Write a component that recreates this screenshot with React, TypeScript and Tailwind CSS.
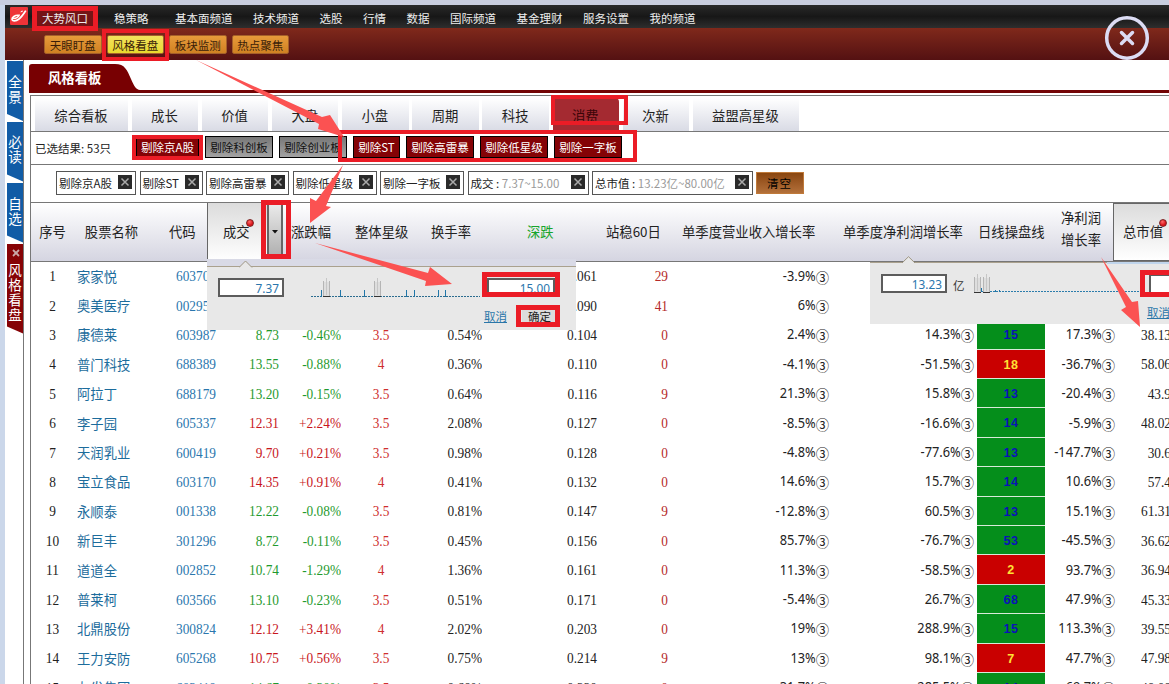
import { ReactNode } from 'react';
import clsx from 'clsx';

const NAV = ['基本面频道', '技术频道', '选股', '行情', '数据', '国际频道', '基金理财', '服务设置', '我的频道'];
const SUB_NAV = ['天眼盯盘', '风格看盘', '板块监测', '热点聚焦'];
const STYLE_TABS = ['成长', '价值', '大盘', '小盘', '周期', '科技', '消费', '次新'];

const EXCLUDES = [
  { label: '剔除京A股', on: true, width: 'w-[63px]' },
  { label: '剔除科创板', on: false, width: 'w-[68px]' },
  { label: '剔除创业板', on: false, width: 'w-[68px]' },
  { label: '剔除ST', on: true, width: 'w-[47px]' },
  { label: '剔除高雷暴', on: true, width: 'w-[68px]' },
  { label: '剔除低星级', on: true, width: 'w-[68px]' },
  { label: '剔除一字板', on: true, width: 'w-[68px]' },
];

const CHIPS = [
  { label: '剔除京A股', value: '', width: 'w-[80px]' },
  { label: '剔除ST', value: '', width: 'w-[63px]' },
  { label: '剔除高雷暴', value: '', width: 'w-[83px]' },
  { label: '剔除低星级', value: '', width: 'w-[84px]' },
  { label: '剔除一字板', value: '', width: 'w-[84px]' },
  { label: '成交 : ', value: '7.37~15.00', width: 'w-[121px]' },
  { label: '总市值 : ', value: '13.23亿~80.00亿', width: 'w-[161px]' },
];

// no, name, code, price, change, star, turnover, dip, days, revenue, profit, line, net, cap
const ROWS: string[][] = [
  ['1', '家家悦', '603708', '', '', '', '', '0.061', '29', '-3.9%', '', '', '', ''],
  ['2', '奥美医疗', '002950', '', '', '', '', '0.090', '41', '6%', '', '', '', ''],
  ['3', '康德莱', '603987', '8.73', '-0.46%', '3.5', '0.54%', '0.104', '0', '2.4%', '14.3%', '15', '17.3%', '38.13亿'],
  ['4', '普门科技', '688389', '13.55', '-0.88%', '4', '0.36%', '0.110', '0', '-4.1%', '-51.5%', '18', '-36.7%', '58.06亿'],
  ['5', '阿拉丁', '688179', '13.20', '-0.15%', '3.5', '0.64%', '0.116', '9', '21.3%', '15.8%', '13', '-20.4%', '43.9亿'],
  ['6', '李子园', '605337', '12.31', '+2.24%', '3.5', '2.08%', '0.127', '0', '-8.5%', '-16.6%', '14', '-5.9%', '48.02亿'],
  ['7', '天润乳业', '600419', '9.70', '+0.21%', '3.5', '0.98%', '0.128', '0', '-4.8%', '-77.6%', '13', '-147.7%', '30.6亿'],
  ['8', '宝立食品', '603170', '14.35', '+0.91%', '4', '0.41%', '0.132', '0', '14.6%', '15.7%', '14', '10.6%', '57.4亿'],
  ['9', '永顺泰', '001338', '12.22', '-0.08%', '3.5', '0.81%', '0.147', '9', '-12.8%', '60.5%', '13', '15.1%', '61.31亿'],
  ['10', '新巨丰', '301296', '8.72', '-0.11%', '3.5', '0.45%', '0.156', '0', '85.7%', '-76.7%', '53', '-45.5%', '36.62亿'],
  ['11', '道道全', '002852', '10.74', '-1.29%', '4', '1.36%', '0.161', '0', '11.3%', '-58.5%', '2', '93.7%', '36.94亿'],
  ['12', '普莱柯', '603566', '13.10', '-0.23%', '3.5', '0.51%', '0.171', '0', '-5.4%', '26.7%', '68', '47.9%', '45.33亿'],
  ['13', '北鼎股份', '300824', '12.12', '+3.41%', '4', '2.02%', '0.203', '0', '19%', '288.9%', '15', '113.3%', '39.55亿'],
  ['14', '王力安防', '605268', '10.75', '+0.56%', '3.5', '0.75%', '0.214', '9', '13%', '98.1%', '7', '47.7%', '47.98亿'],
  ['15', '友发集团', '603418', '14.67', '-0.30%', '3.5', '0.68%', '0.220', '0', '31.7%', '285.5%', '14', '69.7%', '48.08亿'],
];

const RED_LINES = ['18', '2', '7'];

const Num = ({ children }: { children: ReactNode }) => (
  <span className="inline-block scale-y-[1.1] font-['Liberation_Serif',serif]">{children}</span>
);

const Growth = ({ value, className }: { value: string; className: string }) => (
  <div className={clsx('flex shrink-0 items-center justify-end text-[#222]', className)}>
    {value && (
      <>
        <span className="inline-block scale-y-[1.1] font-['Noto_Sans',sans-serif] text-[12.8px]">{value}</span>
        <span className="relative top-px text-[13.33px]">③</span>
      </>
    )}
  </div>
);

const Row = ({ row }: { row: string[] }) => {
  const [no, name, code, price, change, star, turnover, dip, days, revenue, profit, line, net, cap] = row;
  const tone = change.startsWith('+') ? 'text-[#c8161d]' : 'text-[#1f9a2e]';
  return (
    <div className="flex h-[29.4px] items-center whitespace-nowrap text-right text-[13.33px] leading-[29px]">
      <div className="w-[43px] shrink-0 text-center text-[#222]"><Num>{no}</Num></div>
      <div className="w-[90px] shrink-0 pl-[3px] text-left text-[#1c6c9c]">{name}</div>
      <div className="w-[52px] shrink-0 text-[#2a76ad]"><Num>{code}</Num></div>
      <div className={clsx('w-[63px] shrink-0', tone)}><Num>{price}</Num></div>
      <div className={clsx('w-[62px] shrink-0', tone)}><Num>{change}</Num></div>
      <div className="w-20 shrink-0 text-center text-[#cf2f2f]"><Num>{star}</Num></div>
      <div className="w-[61px] shrink-0 text-[#222]"><Num>{turnover}</Num></div>
      <div className="w-[115px] shrink-0 text-[#222]"><Num>{dip}</Num></div>
      <div className="w-[71px] shrink-0 text-[#b52a2a]"><Num>{days}</Num></div>
      <Growth value={revenue} className="w-[161px]" />
      <Growth value={profit} className="w-[145px]" />
      <div
        className={clsx(
          "ml-[3px] h-full w-[68px] shrink-0 border-b border-[#d9ead9] text-center font-['Liberation_Sans',sans-serif] text-[12.5px] font-bold leading-[31px] tracking-[0.5px]",
          RED_LINES.includes(line) ? 'bg-[#c90000] text-[#ffe135]' : 'bg-[#058e1b] text-[#0a12b8]',
        )}
      >
        {line}
      </div>
      <Growth value={net} className="w-[70px]" />
      <div className="w-[73px] shrink-0 pr-1 text-[#222]"><Num>{cap}</Num></div>
    </div>
  );
};

const SideTab = ({ text, className, closable = false }: { text: string; className: string; closable?: boolean }) => (
  <div
    className={clsx(
      'flex w-4 flex-col items-center text-[13.5px] leading-[15.3px] text-white [clip-path:polygon(0_0,100%_0,100%_100%,0_calc(100%_-_7px))]',
      className,
    )}
  >
    {closable && (
      <svg className="mb-[5px] ml-0.5 mt-1 shrink-0" width="8" height="8">
        <path d="M1 1L7 7M7 1L1 7" stroke="#c9a8a8" strokeWidth="1.8" />
      </svg>
    )}
    {text.split('').map((c) => (
      <span key={c}>{c}</span>
    ))}
  </div>
);

const Dot = ({ className }: { className: string }) => (
  <span
    className={clsx(
      'absolute h-2 w-2 rounded-full border border-[#7d2222] bg-[radial-gradient(circle_at_40%_30%,#ff6a6a,#d9151b_60%)]',
      className,
    )}
  />
);

const Head = ({ children, className }: { children: ReactNode; className: string }) => (
  <div className={clsx('flex shrink-0 items-center whitespace-nowrap', className)}>{children}</div>
);

const Mark = ({ className }: { className: string }) => (
  <div className={clsx('absolute border-[#eb1c26]', className)} />
);

const Slider = ({ x }: { x: number }) => (
  <g>
    <rect x={x - 2.5} y="4" width="6" height="15" fill="#dedede" />
    <path d={`M${x - 2.5} 3V19M${x + 3.5} 3V19`} stroke="#b5b5b5" />
    <path d={`M${x + 0.5} 0V17`} stroke="#c6c6c6" />
    <path d={`M${x - 3} 18.5h7`} stroke="#333" />
  </g>
);

const PricePopup = () => (
  <div className="absolute left-[207px] top-[259px] h-[71px] w-[369px] bg-[#e8e8e8]">
    <div className="h-2 border-b border-[#aaa18e] bg-[#d9dae6]" />
    <svg className="absolute left-8 top-px" width="14" height="8">
      <path d="M0 7.5L6.5 1L13 7.5" fill="#e8e8e8" stroke="#9d9582" />
    </svg>
    <div className="flex items-start pl-[11px] pt-[11px]">
      <div className="h-[19px] w-[66px] shrink-0 border-2 border-[#5c5c5c] bg-white pr-[3px] text-right font-['Noto_Sans',sans-serif] text-[11.8px] leading-[17px] text-[#2a76ad]">
        7.37
      </div>
      <svg className="ml-[27px] shrink-0" width="169" height="20">
        <path d="M0 18.5H169" stroke="#2b6c8f" strokeDasharray="2 1" />
        <path d="M10.5 12V19M29.5 12V19M53.5 12V19M95.5 12V19M103.5 12V19M127.5 12V19M134.5 12V19" stroke="#2176a8" />
        <Slider x={15} />
        <Slider x={66} />
      </svg>
      <div className="ml-[7px] h-[19px] w-[68px] shrink-0 border-2 border-[#5c5c5c] bg-white pr-[3px] text-right font-['Noto_Sans',sans-serif] text-[11.8px] leading-[17px] text-[#2a76ad]">
        15.00
      </div>
    </div>
    <div className="flex h-[23px] items-center justify-end pr-[19px] pt-3.5 text-[11.5px]">
      <span className="text-[#2a76a8] underline">取消</span>
      <span className="ml-[15px] bg-[#dcdcdc] px-1.5 leading-[17px] text-[#222]">确定</span>
    </div>
  </div>
);

const CapPopup = () => (
  <div className="absolute left-[870px] top-[262px] h-[62px] w-[299px] bg-[#e8e8e8]">
    <div className="flex h-0.5">
      <div className="h-px w-[237px] bg-[#aaa18e]" />
      <div className="h-0.5 flex-1 bg-[#c0d5ec]" />
    </div>
    <svg className="absolute -top-1.5 left-8" width="14" height="8">
      <path d="M0 7L6.5 0.7L13 7" fill="#e8e8e8" stroke="#9d9582" />
    </svg>
    <div className="flex items-start pl-[11px] pt-2.5">
      <div className="h-[19px] w-[66px] shrink-0 border-2 border-[#5c5c5c] bg-white pr-[3px] text-right font-['Noto_Sans',sans-serif] text-[11.8px] leading-[17px] text-[#2a76ad]">
        13.23
      </div>
      <span className="ml-1.5 shrink-0 pt-px text-[11.5px] leading-5 text-[#333]">亿</span>
      <svg className="ml-[9px] shrink-0 overflow-visible" width="162" height="20">
        <path d="M4 17.5H165" stroke="#2b7cab" strokeDasharray="2 1" />
        <Slider x={3} />
        <Slider x={12} />
        <path d="M7.5 14V18M21.5 16V18M25.5 16V18" stroke="#2176a8" />
      </svg>
      <div className="ml-[13px] h-[19px] w-10 shrink-0 border-l-2 border-t-2 border-[#5c5c5c] bg-white" />
    </div>
    <div className="ml-[277px] mt-[7px] whitespace-nowrap text-[11.5px] leading-5 text-[#2a76a8] underline">取消</div>
  </div>
);

export default function App() {
  return (
    <div className="relative flex h-[684px] w-[1169px] flex-col overflow-hidden bg-white font-['Noto_Sans_CJK_SC',sans-serif] text-[#222]">
      <div className="h-[5px] shrink-0 bg-[#c9cedf]" />
      <div className="flex min-h-0 flex-1">
        <div className="w-[5px] shrink-0 bg-[#cbd7ea]" />
        <div className="flex min-w-0 flex-1 flex-col">
          <nav className="flex h-[23px] shrink-0 items-center whitespace-nowrap bg-linear-to-b from-[#2a2a2a] via-[#171717] to-[#2e2e2e] pt-[3px] text-[11.5px] leading-[20px] text-[#eee]">
            <svg className="mb-1 ml-[5px] shrink-0" width="18" height="18" viewBox="0 0 18 18">
              <rect width="18" height="18" rx="1" fill="#ee3338" />
              <path d="M8.5 8.3C5 8 1.8 10.5 2 12.5C2.2 14.3 5.8 14.3 9 12C11.6 10.2 13.6 7 15.8 3.6" fill="none" stroke="#fff" strokeWidth="1.7" />
              <path d="M3 11.5C5.5 11.6 8.5 10 9.5 7.5" fill="none" stroke="#fff" strokeWidth="1.5" />
              <path d="M10 5.2L12.4 3.2L12.7 5Z" fill="#fff" />
            </svg>
            <span className="ml-[9px] w-[57px] bg-[#741416] pl-[5px]">大势风口</span>
            <span className="ml-5 w-[61px]">稳策略</span>
            <div className="flex gap-[20.5px]">
              {NAV.map((item) => (
                <span key={item}>{item}</span>
              ))}
            </div>
          </nav>
          <div className="flex h-[31.5px] shrink-0 gap-[5px] bg-linear-to-b from-[#80291b] to-[#541112] pl-[39px] pt-[7px]">
            {SUB_NAV.map((item, i) => (
              <span
                key={item}
                className={clsx(
                  'h-[19px] w-[57.5px] rounded-[2px] border border-[#a5602a] text-center text-[11.5px] leading-[18px] text-[#3a1d08]',
                  i === 1 ? 'bg-linear-to-b from-[#f3e25c] to-[#e9d92c]' : 'bg-linear-to-b from-[#e79a3a] to-[#d08122]',
                )}
              >
                {item}
              </span>
            ))}
          </div>
          <div className="flex min-h-0 flex-1">
            <aside className="flex w-[19px] shrink-0 flex-col gap-px border-r border-[#777] pl-0.5 pt-[1.5px]">
              <SideTab text="全景" className="h-[60px] bg-[#115ca6] pt-[13px]" />
              <SideTab text="必读" className="h-[59.5px] bg-[#115ca6] pt-3" />
              <SideTab text="自选" className="h-[60px] bg-[#115ca6] pt-[13px]" />
              <SideTab text="风格看盘" closable className="h-[90px] bg-[#860306] pt-px" />
            </aside>
            <main className="min-w-0 flex-1 pl-[5px] pt-1">
              <div className="h-[29px] border-b-[3px] border-[#730405]">
                <svg className="absolute" width="112" height="27">
                  <path d="M0 27V3Q0 0 3 0H86C96 0 98 6 102 15C105 22 107 25.5 111 26V27Z" fill="#780002" />
                </svg>
                <div className="relative pl-[19px] text-[13.33px] font-bold leading-[27px] text-white">风格看板</div>
              </div>
              <section className="ml-px mt-0.5 h-[600px] border-l border-t border-[#777]">
                <div className="flex h-9 gap-[3.67px] border-b border-[#777] pl-1 pt-0.5 text-center text-[13.33px] leading-[35px]">
                  <div className="w-[93px] bg-linear-to-b from-white to-[#d9dbe5] pr-px">综合看板</div>
                  {STYLE_TABS.map((t) => (
                    <div
                      key={t}
                      className={clsx(
                        'w-[66.5px] pr-px',
                        t === '消费' ? 'rounded-t bg-[#a42a31] text-[#3b0508]' : 'bg-linear-to-b from-white to-[#d9dbe5]',
                      )}
                    >
                      {t}
                    </div>
                  ))}
                  <div className="w-[106px] bg-linear-to-b from-white to-[#d9dbe5] pr-px">益盟高星级</div>
                </div>
                <div className="flex h-[33px] gap-1.5 border-b border-[#777] pt-1 text-[11.5px]">
                  <span className="w-[99px] whitespace-nowrap pl-1 leading-[24px]">已选结果: 53只</span>
                  {EXCLUDES.map((e) => (
                    <span
                      key={e.label}
                      className={clsx(
                        'h-[22px] whitespace-nowrap border border-black text-center leading-[20px]',
                        e.on ? 'bg-[#840306] text-white' : 'bg-linear-to-b from-[#777] to-[#a3a3a3] text-[#111]',
                        e.width,
                      )}
                    >
                      {e.label}
                    </span>
                  ))}
                </div>
                <div className="flex h-[38px] gap-[3.5px] border-b border-[#777] pl-[25px] pt-1.5 text-[11.5px]">
                  {CHIPS.map((c) => (
                    <span
                      key={c.label}
                      className={clsx(
                        'flex h-6 shrink-0 items-center justify-between whitespace-pre border border-[#555] pl-0.5 pr-[3px] leading-[22px]',
                        c.width,
                      )}
                    >
                      <span>
                        {c.label}
                        <span className="text-[#999]">{c.value}</span>
                      </span>
                      <svg width="14" height="14" viewBox="0 0 14 14" className="mb-0.5 shrink-0">
                        <rect width="14" height="14" fill="#2a2a2a" />
                        <path d="M3.5 3.5L10.5 10.5M10.5 3.5L3.5 10.5" stroke="#aaa" strokeWidth="1.5" />
                      </svg>
                    </span>
                  ))}
                  <span className="-ml-px mt-px h-[22px] w-12 shrink-0 border border-[#c07a3a] bg-linear-to-b from-[#8a460e] to-[#b3703a] text-center leading-[20px] tracking-[1px] text-black">
                    清空
                  </span>
                </div>
                <div className="flex h-[59px] border-b border-[#777] bg-linear-to-b from-white to-[#d5d5e1] text-[13.33px]">
                  <Head className="w-[43px] justify-center">序号</Head>
                  <Head className="w-[75px] justify-center">股票名称</Head>
                  <Head className="w-[58px] pl-5">代码</Head>
                  <Head className="relative w-[60px] border-l border-[#666] bg-linear-to-b from-[#dcdcdc] to-white pl-[15px]">
                    成交
                    <Dot className="left-[38px] top-4" />
                  </Head>
                  <Head className="w-4 justify-center border-x-2 border-[#666] bg-linear-to-b from-[#ececec] to-[#aaa]">
                    <svg width="6" height="4">
                      <path d="M0 0H6L3 3.5Z" fill="#111" />
                    </svg>
                  </Head>
                  <Head className="w-[66px] pl-2">涨跌幅</Head>
                  <Head className="w-[76px] pl-1.5">整体星级</Head>
                  <Head className="w-[96px] pl-1.5">换手率</Head>
                  <Head className="w-[79px] pl-1.5 text-[#18a52b]">深跌</Head>
                  <Head className="w-[76px] pl-1.5">站稳60日</Head>
                  <Head className="w-[161px] pl-1.5">单季度营业收入增长率</Head>
                  <Head className="w-[135px] pl-1.5">单季度净利润增长率</Head>
                  <Head className="w-[83px] pl-1.5">日线操盘线</Head>
                  <Head className="w-[58px] pb-1.5 pl-1.5 leading-[21.5px]">
                    净利润
                    <br />
                    增长率
                  </Head>
                  <Head className="relative w-[60px] border border-[#666] bg-linear-to-b from-[#dcdcdc] to-white pl-[9px]">
                    总市值
                    <Dot className="left-[45px] top-[15px]" />
                  </Head>
                </div>
                {ROWS.map((row) => (
                  <Row key={row[0]} row={row} />
                ))}
              </section>
            </main>
          </div>
        </div>
      </div>

      <PricePopup />
      <CapPopup />

      <Mark className="left-8 top-1.5 h-[25px] w-[66px] border-[5px]" />
      <Mark className="left-[102px] top-[29px] h-8 w-[67px] border-4" />
      <Mark className="left-[551px] top-[95px] h-[30px] w-[77px] border-4" />
      <Mark className="left-[132px] top-[135px] h-[25px] w-[71px] border-4" />
      <Mark className="left-[338px] top-[130px] h-8 w-[299px] border-4" />
      <Mark className="left-[261px] top-[200px] h-[59px] w-[30px] border-[5px]" />
      <Mark className="left-[482px] top-[272px] h-[25px] w-[78px] border-[5px]" />
      <Mark className="left-[516px] top-[305px] h-[22px] w-11 border-[5px]" />
      <Mark className="left-[1140px] top-[270px] h-[27px] w-10 border-[5px]" />

      <svg className="absolute inset-0" width="1169" height="684" fill="#fb5252">
        <path d="M196 60L322 117L330 115L344 137L318 129L319 124Z" />
        <path d="M343 165L326 206L331 207L310 223L310 198L316 201Z" />
        <path d="M315 243L428 273L430 267L452 284L425 286L426 281Z" />
        <path d="M1101 257L1132 302L1138 301L1140 327L1121 310L1126 307Z" />
      </svg>

      <svg className="absolute left-[1104px] top-[15px]" width="46" height="46" fill="none" stroke="#dcdcf4" strokeWidth="3.5">
        <circle cx="23" cy="23" r="20.3" />
        <path d="M17.5 17.5L28.5 28.5M28.5 17.5L17.5 28.5" strokeLinecap="round" />
      </svg>
    </div>
  );
}
